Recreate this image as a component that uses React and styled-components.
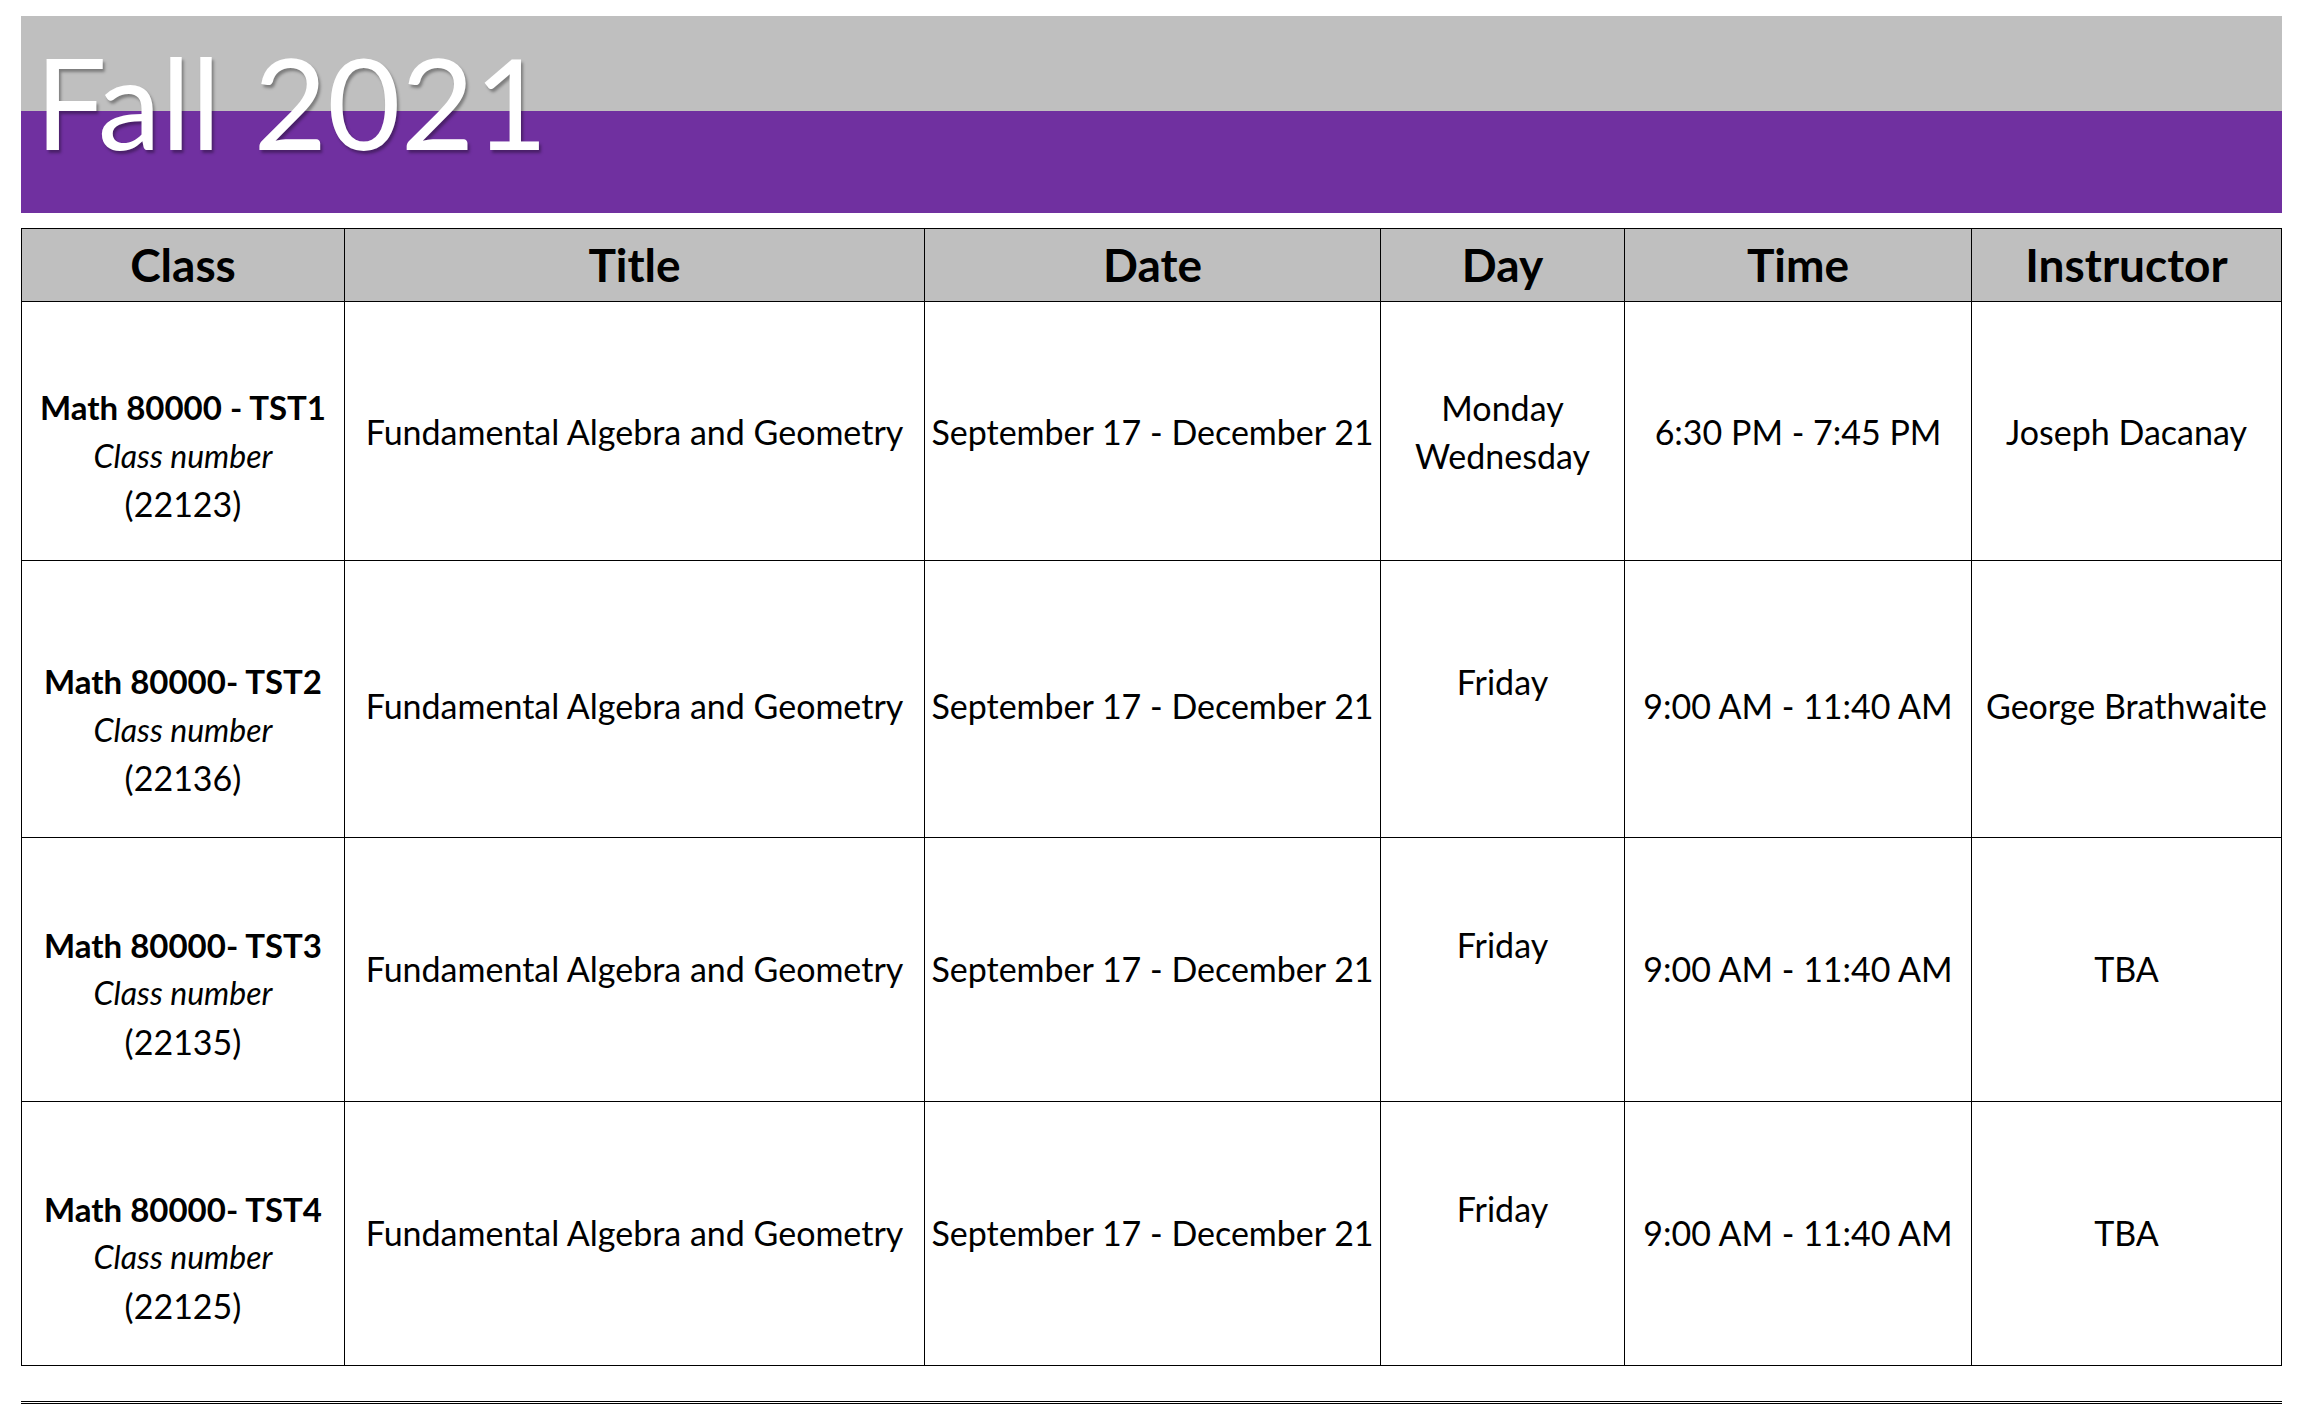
import React from "react";
import styled, { createGlobalStyle } from "styled-components";

const Global = createGlobalStyle`
  html, body { margin: 0; padding: 0; background: #ffffff; }
  body { font-family: Lato, "Open Sans", "Liberation Sans", sans-serif; color: #000; }
`;

const Page = styled.div`
  width: 2261px;
  padding: 16px 0 0 21px;
  display: flex;
  flex-direction: column;
`;

const Banner = styled.header`
  height: 197px;
  background: linear-gradient(to bottom, #bfbfbf 0, #bfbfbf 95px, #7030a0 95px, #7030a0 100%);
  padding: 22px 0 0 14px;
  box-sizing: border-box;
`;

const BannerTitle = styled.h1`
  margin: 0;
  font-family: Lato, "Open Sans", sans-serif;
  font-weight: 400;
  font-size: 127px;
  line-height: 1;
  color: #ffffff;
  text-shadow: 2px 3px 3px rgba(0, 0, 0, 0.35);
`;

const Table = styled.div`
  margin-top: 15px;
  display: grid;
  grid-template-columns: 322px 579px 455px 243px 346px 309px;
  grid-template-rows: 72px 258px 276px 263px 263px;
  gap: 1px;
  background: #000;
  border: 1px solid #000;
`;

const HeadCell = styled.div`
  background: #bfbfbf;
  display: flex;
  align-items: center;
  justify-content: center;
  font-weight: 700;
  font-size: 46px;
  line-height: 1;
`;

const Cell = styled.div`
  background: #ffffff;
  display: flex;
  flex-direction: column;
  align-items: center;
  justify-content: center;
  text-align: center;
  font-size: 34px;
  line-height: 48.5px;
  white-space: nowrap;
  box-sizing: border-box;
  padding-top: ${(p) => (p.$shift === "down" ? 48 : 0) + (p.$drop || 0) * 2}px;
  padding-bottom: ${(p) => (p.$shift === "up" ? "48px" : "0")};
`;

const ClassCode = styled.span`
  font-weight: 700;
  font-size: 33px;
`;

const ClassLabel = styled.span`
  font-style: italic;
  font-size: 32px;
`;

const Line = styled.span``;

const Footer = styled.div`
  margin-top: 35px;
  height: 0;
  border-top: 3px double #000;
`;

const headers = ["Class", "Title", "Date", "Day", "Time", "Instructor"];

const rows = [
  {
    code: "Math 80000 - TST1",
    num: "(22123)",
    days: ["Monday", "Wednesday"],
    time: "6:30 PM - 7:45 PM",
    instructor: "Joseph Dacanay",
    drop: 1,
  },
  {
    code: "Math 80000- TST2",
    num: "(22136)",
    days: ["Friday"],
    time: "9:00 AM - 11:40 AM",
    instructor: "George Brathwaite",
    drop: 7,
  },
  {
    code: "Math 80000- TST3",
    num: "(22135)",
    days: ["Friday"],
    time: "9:00 AM - 11:40 AM",
    instructor: "TBA",
    drop: 0,
  },
  {
    code: "Math 80000- TST4",
    num: "(22125)",
    days: ["Friday"],
    time: "9:00 AM - 11:40 AM",
    instructor: "TBA",
    drop: 0,
  },
];

export default function App() {
  return (
    <>
      <Global />
      <Page>
        <Banner>
          <BannerTitle>Fall 2021</BannerTitle>
        </Banner>
        <Table>
          {headers.map((h) => (
            <HeadCell key={h}>{h}</HeadCell>
          ))}
          {rows.map((r) => (
            <React.Fragment key={r.code}>
              <Cell $shift="down" $drop={r.drop}>
                <ClassCode>{r.code}</ClassCode>
                <ClassLabel>Class number</ClassLabel>
                <Line>{r.num}</Line>
              </Cell>
              <Cell $drop={r.drop}>Fundamental Algebra and Geometry</Cell>
              <Cell $drop={r.drop}>September 17 - December 21</Cell>
              <Cell $shift={r.days.length === 1 ? "up" : undefined} $drop={r.drop}>
                {r.days.map((d) => (
                  <Line key={d}>{d}</Line>
                ))}
              </Cell>
              <Cell $drop={r.drop}>{r.time}</Cell>
              <Cell $drop={r.drop}>{r.instructor}</Cell>
            </React.Fragment>
          ))}
        </Table>
        <Footer />
      </Page>
    </>
  );
}
